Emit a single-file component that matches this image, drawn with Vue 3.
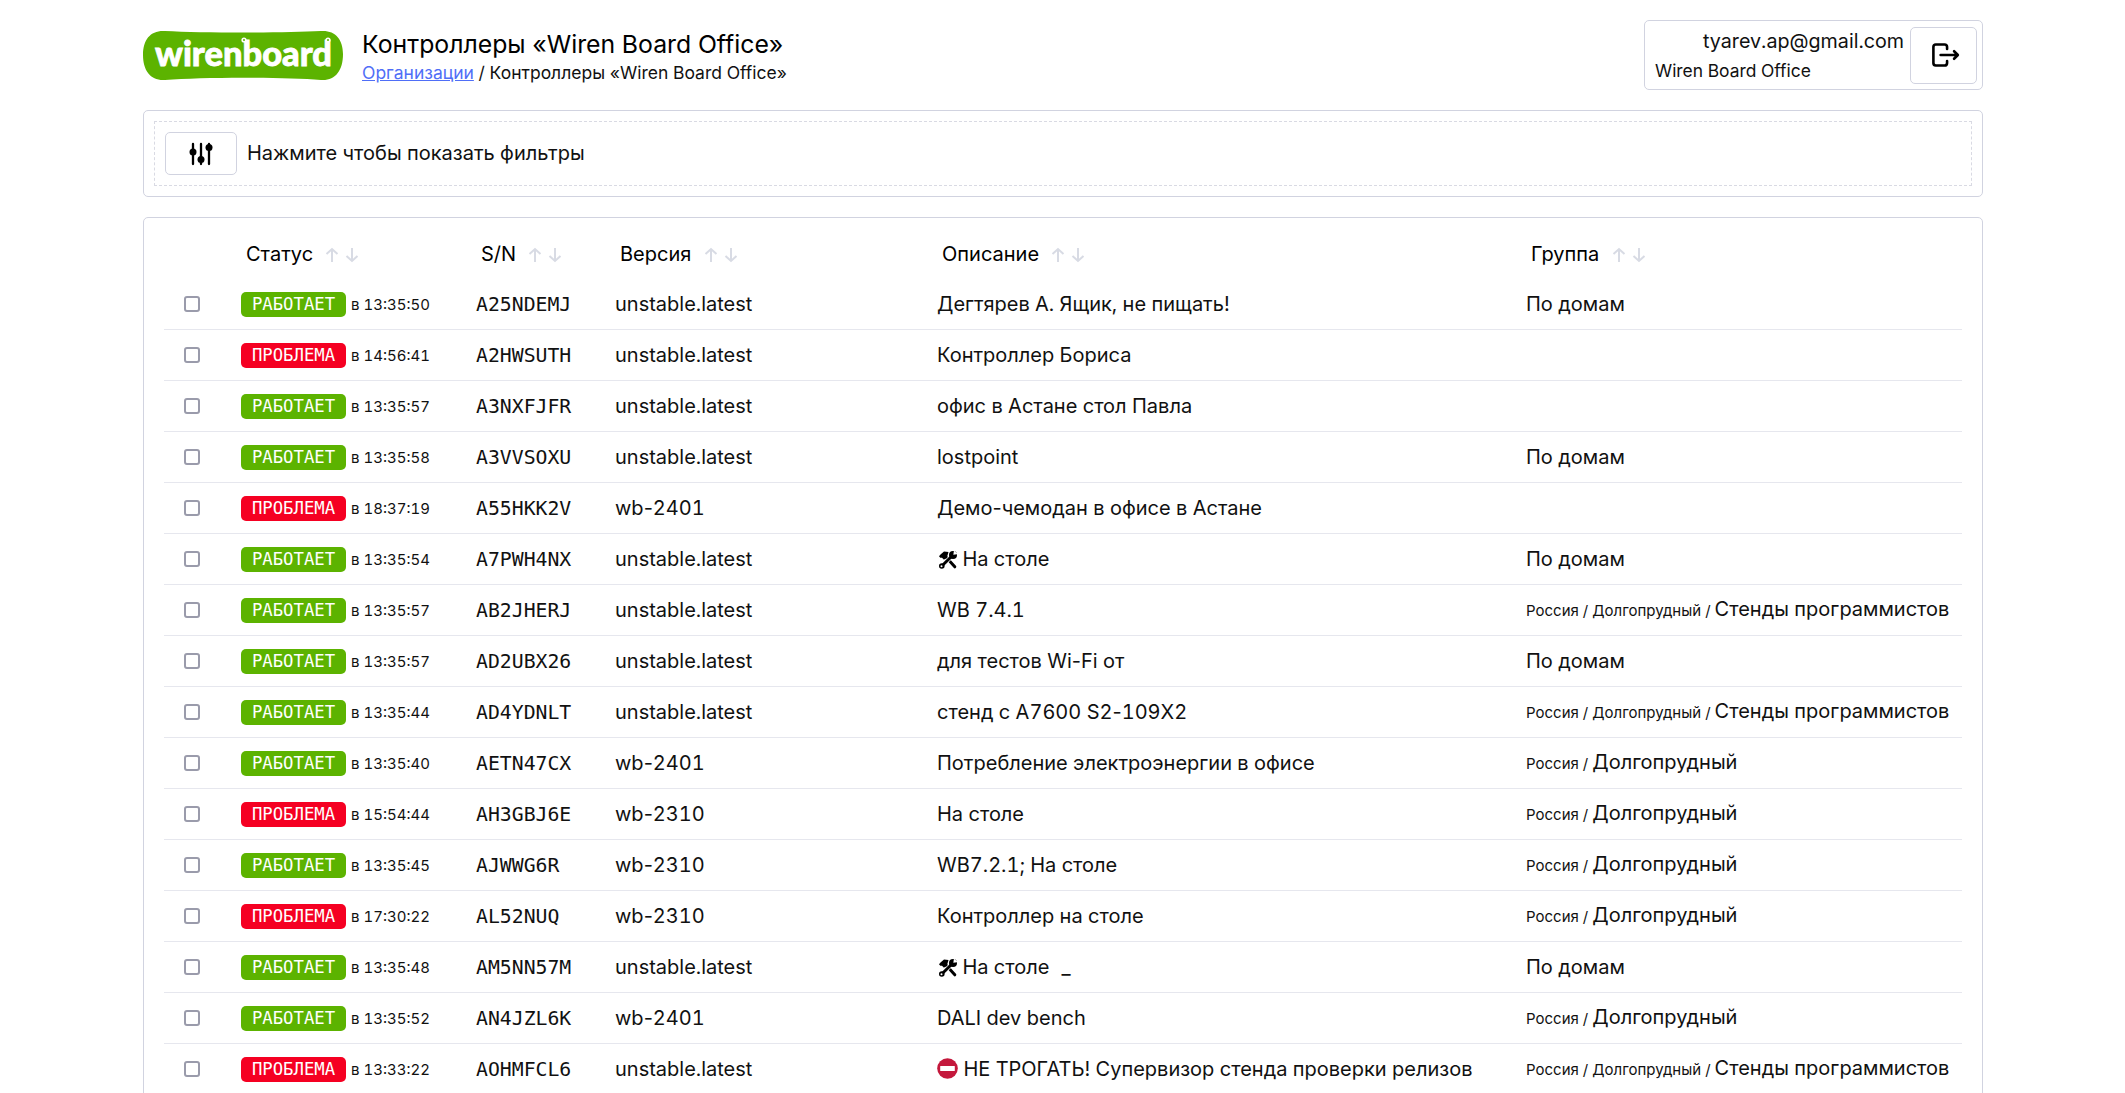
<template>
  <div class="page">
    <header class="top">
      <div class="logo">
        <svg width="200" height="51" viewBox="0 0 200 51">
          <path d="M22 1 C60 3 140 3 178 1 C192 0 200 9 200 24 C200 41 192 51 178 50 C140 47 60 47 22 50 C8 51 0 41 0 25 C0 9 8 0 22 1 Z" fill="#5cb300" />
          <text x="12" y="36" class="logo-text" textLength="177" lengthAdjust="spacingAndGlyphs">wirenboard</text>
          <circle cx="101" cy="10" r="2.6" fill="#fff" />
          <circle cx="185" cy="10" r="2.6" fill="#fff" />
          <circle cx="101" cy="10" r="1" fill="#5cb300" />
          <circle cx="185" cy="10" r="1" fill="#5cb300" />
        </svg>
      </div>
      <div class="heading">
        <h1>Контроллеры «Wiren Board Office»</h1>
        <div class="crumbs"><a href="#">Организации</a> / Контроллеры «Wiren Board Office»</div>
      </div>
      <div class="user">
        <div class="user-info">
          <div class="email">tyarev.ap@gmail.com</div>
          <div class="org">Wiren Board Office</div>
        </div>
        <button class="btn logout">
          <svg width="28" height="24" viewBox="0 0 26 22" fill="none" stroke="#000" stroke-width="2.4" stroke-linecap="round" stroke-linejoin="round">
            <path d="M14 5.500V3.500A2.300 2.300 0 0 0 11.700 1.300H3.500A2.300 2.300 0 0 0 1.300 3.500V18.500A2.300 2.300 0 0 0 3.500 20.700H11.700A2.300 2.300 0 0 0 14 18.500V16.500" />
            <path d="M8 11H23.500M20.500 7.500 24 11l-3.500 3.500" />
          </svg>
        </button>
      </div>
    </header>

    <section class="card filters">
      <div class="filters-inner">
        <button class="btn filter-btn">
          <svg width="24" height="24" viewBox="0 0 24 24" fill="#000" stroke="#000" stroke-width="2.3" stroke-linecap="round">
            <path d="M4 2v20M12 2v20M20 2v20" />
            <circle cx="4" cy="10" r="3.500" stroke="none" />
            <circle cx="12" cy="17.500" r="3.500" stroke="none" />
            <circle cx="20" cy="5.500" r="3.500" stroke="none" />
          </svg>
        </button>
        <span class="filters-text">Нажмите чтобы показать фильтры</span>
      </div>
    </section>

    <section class="card list">
      <table>
        <colgroup>
          <col class="c-check" />
          <col class="c-status" />
          <col class="c-sn" />
          <col class="c-version" />
          <col class="c-desc" />
          <col />
        </colgroup>
        <thead>
          <tr>
            <th></th>
            <th v-for="col in columns" :key="col">
              {{ col }}
              <span class="sort">
                <svg width="14" height="16" viewBox="0 0 14 16"><path d="M7 15V2M1.500 7 7 2l5.500 5" /></svg>
                <svg width="14" height="16" viewBox="0 0 14 16"><path d="M7 1v13M1.500 9 7 14l5.500-5" /></svg>
              </span>
            </th>
          </tr>
        </thead>
        <tbody>
          <tr v-for="row in rows" :key="row.sn">
            <td class="check"><span class="checkbox"></span></td>
            <td>
              <span class="badge" :class="row.ok ? 'ok' : 'bad'">{{ row.ok ? "РАБОТАЕТ" : "ПРОБЛЕМА" }}</span>
              <span class="time">в {{ row.time }}</span>
            </td>
            <td class="sn">{{ row.sn }}</td>
            <td>
              <template v-for="(part, i) in splitDash(row.version)" :key="i"><span v-if="i" class="dash">-</span>{{ part }}</template>
            </td>
            <td>
              <svg v-if="row.icon === 'tools'" class="emoji" width="20" height="18" viewBox="-2 0 20 18">
                <path d="M1.500 3.500 5 .6 9.500 1 8.800 3.500 8 6 5 8.800 3 6.800 1.300 6.800 0 5.300z" fill="#000" />
                <path d="M6 5 15.800 15.800" stroke="#000" stroke-width="3" fill="none" stroke-linecap="round" />
                <path d="M13.500 4.500 2.800 15" stroke="#fff" stroke-width="4.400" fill="none" />
                <path d="M13.500 4.500 2.800 15" stroke="#000" stroke-width="3" fill="none" />
                <circle cx="14" cy="4" r="4" fill="#000" />
                <path d="M14.300 3.700 15 -.5 19 3z" fill="#fff" />
                <circle cx="2.800" cy="15" r="2.800" fill="#000" />
                <circle cx="2.500" cy="15.300" r="1" fill="#fff" />
              </svg>
              <svg v-if="row.icon === 'stop'" class="emoji" width="21" height="21" viewBox="0 0 21 21">
                <circle cx="10.500" cy="10.500" r="10.300" fill="#c4183c" />
                <rect x="3.200" y="8" width="14.600" height="5" rx=".5" fill="#fff" />
              </svg>
              {{ " " }}<template v-for="(part, i) in splitDash(row.desc)" :key="i"><span v-if="i" class="dash">-</span>{{ part }}</template><span v-if="row.mark" class="mark">_</span>
            </td>
            <td><span v-if="row.path" class="path">{{ row.path }} / </span>{{ row.group }}</td>
          </tr>
        </tbody>
      </table>
    </section>
  </div>
</template>

<script setup>
const columns = ["Статус", "S/N", "Версия", "Описание", "Группа"];

const home = { group: "По домам" };
const devs = { path: "Россия / Долгопрудный", group: "Стенды программистов" };
const dolgo = { path: "Россия", group: "Долгопрудный" };

const rows = [
  { ok: true, time: "13:35:50", sn: "A25NDEMJ", version: "unstable.latest", desc: "Дегтярев А. Ящик, не пищать!", ...home },
  { ok: false, time: "14:56:41", sn: "A2HWSUTH", version: "unstable.latest", desc: "Контроллер Бориса" },
  { ok: true, time: "13:35:57", sn: "A3NXFJFR", version: "unstable.latest", desc: "офис в Астане стол Павла" },
  { ok: true, time: "13:35:58", sn: "A3VVSOXU", version: "unstable.latest", desc: "lostpoint", ...home },
  { ok: false, time: "18:37:19", sn: "A55HKK2V", version: "wb-2401", desc: "Демо-чемодан в офисе в Астане" },
  { ok: true, time: "13:35:54", sn: "A7PWH4NX", version: "unstable.latest", desc: "На столе", icon: "tools", ...home },
  { ok: true, time: "13:35:57", sn: "AB2JHERJ", version: "unstable.latest", desc: "WB 7.4.1", ...devs },
  { ok: true, time: "13:35:57", sn: "AD2UBX26", version: "unstable.latest", desc: "для тестов Wi-Fi от", ...home },
  { ok: true, time: "13:35:44", sn: "AD4YDNLT", version: "unstable.latest", desc: "стенд с A7600 S2-109X2", ...devs },
  { ok: true, time: "13:35:40", sn: "AETN47CX", version: "wb-2401", desc: "Потребление электроэнергии в офисе", ...dolgo },
  { ok: false, time: "15:54:44", sn: "AH3GBJ6E", version: "wb-2310", desc: "На столе", ...dolgo },
  { ok: true, time: "13:35:45", sn: "AJWWG6R", version: "wb-2310", desc: "WB7.2.1; На столе", ...dolgo },
  { ok: false, time: "17:30:22", sn: "AL52NUQ", version: "wb-2310", desc: "Контроллер на столе", ...dolgo },
  { ok: true, time: "13:35:48", sn: "AM5NN57M", version: "unstable.latest", desc: "На столе", icon: "tools", mark: true, ...home },
  { ok: true, time: "13:35:52", sn: "AN4JZL6K", version: "wb-2401", desc: "DALI dev bench", ...dolgo },
  { ok: false, time: "13:33:22", sn: "AOHMFCL6", version: "unstable.latest", desc: "НЕ ТРОГАТЬ! Супервизор стенда проверки релизов", icon: "stop", ...devs },
];

// tabular-nums widens the hyphen too, so hyphens get their own span
const splitDash = (text) => text.split("-");
</script>

<style>
html,
body {
  margin: 0;
  height: 100%;
  overflow: hidden;
  background: #fff;
}
</style>

<style scoped>
.page {
  height: 1093px;
  overflow: hidden;
  box-sizing: border-box;
  padding: 20px 142px 0 143px;
  font-family: Inter, "Noto Sans", sans-serif;
  font-size: 20px;
  line-height: 27px;
  font-variant-numeric: tabular-nums;
  color: #111;
}
.top {
  display: flex;
  align-items: center;
  height: 70px;
}
.logo {
  display: flex;
  margin-right: 19px;
}
.logo-text {
  font-family: Lato, sans-serif;
  font-weight: 900;
  font-size: 35px;
  fill: #fff;
  stroke: #fff;
  stroke-width: 0.8px;
}
.heading {
  padding-top: 3px;
}
.heading h1 {
  margin: 0;
  font-size: 24.8px;
  line-height: 32px;
  font-weight: 400;
  color: #000;
}
.crumbs {
  font-size: 17.5px;
  line-height: 26px;
}
.crumbs a {
  color: #4f6ef7;
}
.user {
  margin-left: auto;
  display: flex;
  align-items: center;
  box-sizing: border-box;
  width: 339px;
  height: 70px;
  padding: 0 5px 0 10px;
  border: 1px solid #d1d3e0;
  border-radius: 5px;
}
.user-info {
  flex: 1;
  margin-right: 6px;
  padding-top: 2px;
}
.email {
  text-align: right;
  font-size: 19.7px;
  line-height: 28px;
}
.org {
  margin-top: 2px;
  font-size: 17.4px;
  line-height: 28px;
}
.btn {
  display: flex;
  align-items: center;
  justify-content: center;
  padding: 0;
  background: #fff;
  border: 1px solid #d1d3e0;
  border-radius: 5px;
}
.logout {
  width: 67px;
  height: 57px;
  padding-left: 4px;
}
.card {
  border: 1px solid #d1d3e0;
  border-radius: 5px;
  background: #fff;
}
.filters {
  margin-top: 20px;
  height: 87px;
  box-sizing: border-box;
  padding: 10px;
}
.filters-inner {
  height: 65px;
  box-sizing: border-box;
  display: flex;
  align-items: center;
  padding-left: 10px;
  gap: 10px;
  border: 1px dashed #d9dae3;
}
.filter-btn {
  width: 72px;
  height: 43px;
}
.list {
  margin-top: 20px;
  padding: 10px 20px 60px;
}
table {
  width: 100%;
  table-layout: fixed;
  border-collapse: collapse;
}
.c-check {
  width: 73px;
}
.c-status {
  width: 235px;
}
.c-sn {
  width: 139px;
}
.c-version {
  width: 322px;
}
.c-desc {
  width: 589px;
}
th {
  height: 49px;
  padding: 2px 0 0 9px;
  text-align: left;
  font-size: 20px;
  font-weight: 400;
  color: #000;
}
.sort {
  display: inline-flex;
  gap: 6px;
  margin-left: 7px;
  vertical-align: -2px;
}
.sort svg {
  fill: none;
  stroke: #d8dbe4;
  stroke-width: 2;
}
td {
  height: 50px;
  padding: 0 0 0 4px;
  white-space: nowrap;
  border-bottom: 1px solid #e6e7ee;
}
tbody tr:last-child td {
  border-bottom: none;
}
.check {
  padding-left: 20px;
}
.checkbox {
  display: block;
  box-sizing: border-box;
  width: 16px;
  height: 16px;
  border: 2px solid #9a9bab;
  border-radius: 3px;
}
.badge {
  display: inline-block;
  box-sizing: border-box;
  width: 105px;
  height: 25px;
  line-height: 25px;
  text-align: center;
  border-radius: 5px;
  color: #fff;
  font-family: "DejaVu Sans Mono", monospace;
  font-size: 17.3px;
  vertical-align: middle;
}
.ok {
  background: #5cb300;
}
.bad {
  background: #f50022;
}
.time {
  margin-left: 5px;
  font-size: 15px;
  vertical-align: middle;
}
.sn {
  font-family: "DejaVu Sans Mono", monospace;
  font-size: 19.8px;
}
.dash {
  font-variant-numeric: normal;
}
.emoji {
  vertical-align: -3px;
}
.mark {
  margin-left: 12px;
}
.path {
  font-size: 15px;
}
</style>
